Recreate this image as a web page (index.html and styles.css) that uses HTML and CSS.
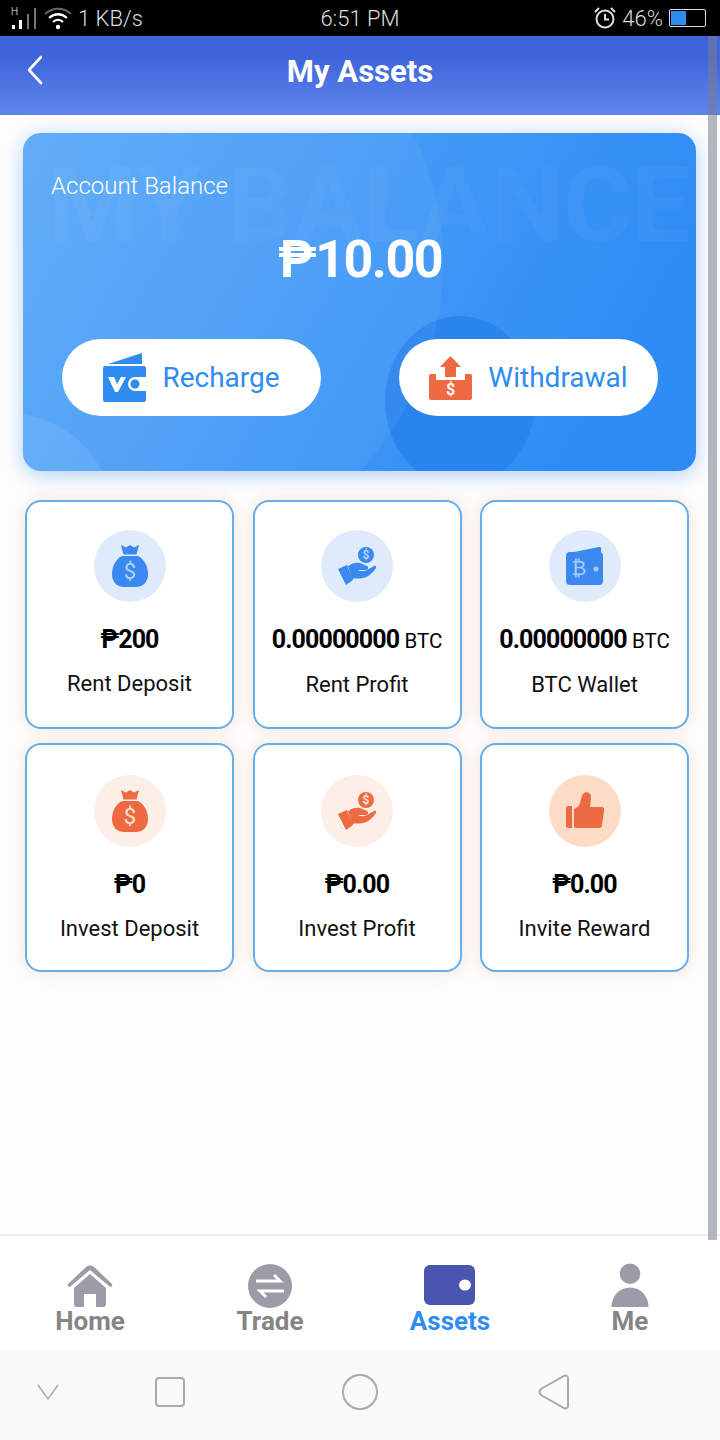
FILE: index.html
```html
<!DOCTYPE html>
<html>
<head>
    <meta charset="UTF-8">
    <title>My Assets</title>
    <link rel="stylesheet" href="styles.css">
</head>
<body>
<svg class="defs" width="0" height="0">
    <symbol id="bag" viewBox="0 0 36 44">
        <path d="M9 1l5 2.500 4-2.500 4 2.500 5-2.500-2.500 9.500h-13z"/>
        <path d="M10 12h16c6 3 10 10 10 18 0 9-6 13-12 13h-12c-6 0-12-4-12-13 0-8 4-15 10-18z"/>
    </symbol>
    <symbol id="hand" viewBox="0 0 38 40">
        <path d="M0 23l9-4 6 15-7 5z"/>
        <path d="M10 20c4-3 8-4 12-3l7 3c2 1 1 4-1 4h-8c3 2 7 1 9 0l7-4c2-1 3 1 2 2-3 5-8 9-13 10-5 1-8 0-11 1z"/>
    </symbol>
</svg>

<div class="status">
    <div class="status-left">
        <svg class="sig" width="28" height="26" viewBox="0 0 28 26">
            <text x="1" y="10" class="sig-h">H</text>
            <g fill="#fff"><rect x="2" y="20" width="3" height="4"/><rect x="9" y="15" width="3" height="9"/></g>
            <g fill="#777"><rect x="17" y="9" width="2" height="15"/><rect x="24" y="3" width="2" height="21"/></g>
        </svg>
        <svg width="30" height="24" viewBox="0 0 30 24" fill="none">
            <path d="M2 8c8-7 18-7 26 0" stroke="#666" stroke-width="2"/>
            <path d="M6 12c6-5 12-5 18 0" stroke="#fff" stroke-width="2.200"/>
            <path d="M10 16c3-3 7-3 10 0" stroke="#fff" stroke-width="2.200"/>
            <circle cx="15" cy="21" r="2.200" fill="#fff"/>
        </svg>
        <span>1 KB/s</span>
    </div>
    <div class="status-time">6:51 PM</div>
    <div class="status-right">
        <svg width="22" height="24" viewBox="0 0 22 24" fill="none" stroke="#ddd" stroke-width="2">
            <circle cx="11" cy="13" r="8.500"/>
            <path d="M11 8v5.500h4M1 6l4-4M21 6l-4-4"/>
        </svg>
        <span>46%</span>
        <div class="battery"><div class="battery-fill"></div></div>
    </div>
</div>

<header class="top">
    <svg class="back" width="18" height="30" viewBox="0 0 18 30" fill="none">
        <path d="M15 2L3 15l12 13" stroke="#fff" stroke-width="2.600" stroke-linecap="round" stroke-linejoin="round"/>
    </svg>
    <h1>My Assets</h1>
</header>

<main class="main">
    <section class="balance">
        <div class="ghost">MY BALANCE</div>
        <div class="blob blob-a"></div>
        <div class="blob blob-b"></div>
        <div class="blob blob-c"></div>
        <div class="balance-label">Account Balance</div>
        <div class="balance-num">₱10.00</div>
        <div class="balance-btns">
            <a class="pill">
                <svg width="43" height="49" viewBox="0 0 43 49">
                    <path d="M5 11L39 0v11z" fill="#2f8cf0"/>
                    <path d="M2 13h39a2 2 0 0 1 2 2v9H32a7 7 0 0 0 0 14h11v9a2 2 0 0 1-2 2H2a2 2 0 0 1-2-2V15a2 2 0 0 1 2-2z" fill="#2f8cf0"/>
                    <path d="M5 24h6l3 7 4-7h5l-8 15h-3z" fill="#fff"/>
                    <circle cx="32" cy="31" r="4.500" fill="#2f8cf0"/>
                </svg>
                <span>Recharge</span>
            </a>
            <a class="pill">
                <svg width="43" height="44" viewBox="0 0 43 44">
                    <path d="M21.500 0L32 11h-5v10H16V11h-5z" fill="#ee6a42"/>
                    <path d="M2 18h5v6h29v-6h5a2 2 0 0 1 2 2v22a2 2 0 0 1-2 2H2a2 2 0 0 1-2-2V20a2 2 0 0 1 2-2z" fill="#ee6a42"/>
                    <text x="21.500" y="39" class="pill-dollar">$</text>
                </svg>
                <span>Withdrawal</span>
            </a>
        </div>
    </section>

    <section class="tiles">
        <div class="tile">
            <div class="disc">
                <svg class="ic-blue" width="36" height="44"><use href="#bag"/><text x="18" y="35" class="ic-dollar ic-dollar-blue">$</text></svg>
            </div>
            <div class="num">₱200</div>
            <div class="name">Rent Deposit</div>
        </div>
        <div class="tile">
            <div class="disc">
                <svg class="ic-blue" width="38" height="40" viewBox="0 0 38 40">
                    <use href="#hand" width="38" height="40"/>
                    <circle cx="28" cy="9" r="8"/>
                    <text x="28" y="13" class="ic-dollar-sm ic-dollar-blue">$</text>
                </svg>
            </div>
            <div class="num">0.00000000 <small>BTC</small></div>
            <div class="name">Rent Profit</div>
        </div>
        <div class="tile">
            <div class="disc">
                <svg class="ic-blue" width="37" height="38" viewBox="0 0 37 38">
                    <path d="M3 6L33 0a2 2 0 0 1 2 3v3z"/>
                    <rect x="0" y="5" width="37" height="33" rx="4"/>
                    <text x="13" y="28" class="ic-btc">₿</text>
                    <circle cx="30" cy="22" r="2.500" fill="#a9ccf7"/>
                </svg>
            </div>
            <div class="num">0.00000000 <small>BTC</small></div>
            <div class="name">BTC Wallet</div>
        </div>
        <div class="tile">
            <div class="disc disc-warm">
                <svg class="ic-red" width="36" height="44"><use href="#bag"/><text x="18" y="35" class="ic-dollar ic-dollar-red">$</text></svg>
            </div>
            <div class="num">₱0</div>
            <div class="name">Invest Deposit</div>
        </div>
        <div class="tile">
            <div class="disc disc-warm">
                <svg class="ic-red" width="38" height="40" viewBox="0 0 38 40">
                    <use href="#hand" width="38" height="40"/>
                    <circle cx="28" cy="9" r="8"/>
                    <text x="28" y="13" class="ic-dollar-sm ic-dollar-red">$</text>
                </svg>
            </div>
            <div class="num">₱0.00</div>
            <div class="name">Invest Profit</div>
        </div>
        <div class="tile">
            <div class="disc disc-peach">
                <svg class="ic-red" width="38" height="38" viewBox="0 0 38 38">
                    <path d="M8 17c3-1 5-3 6-6 1-3 1-6 3-9 2-3 8-2 8 3 0 4-1 8-1 10h11c3 0 4 2 3 4l-2 14c0 2-1 3-3 3H10a2 2 0 0 1-2-2z"/>
                    <path d="M2 14h4v22H2a2 2 0 0 1-2-2V16a2 2 0 0 1 2-2z"/>
                </svg>
            </div>
            <div class="num">₱0.00</div>
            <div class="name">Invite Reward</div>
        </div>
    </section>
    <div class="scroll"></div>
</main>

<nav class="tabs">
    <a class="tab">
        <div class="tab-ic">
            <svg width="46" height="44" viewBox="0 0 46 44">
                <path d="M1 20L19 3c2-2 6-2 8 0l18 17c1 2-1 4-3 2L23 6 4 22c-2 2-4 0-3-2z"/>
                <path d="M23 10l16 14v16a3 3 0 0 1-3 3h-7V30H17v13h-7a3 3 0 0 1-3-3V24z"/>
            </svg>
        </div>
        <span>Home</span>
    </a>
    <a class="tab">
        <div class="tab-ic">
            <svg width="44" height="44" viewBox="0 0 44 44">
                <circle cx="22" cy="22" r="22"/>
                <path d="M8 17h24l-6-6M36 27H12l6 6" fill="none" stroke="#fff" stroke-width="3"/>
            </svg>
        </div>
        <span>Trade</span>
    </a>
    <a class="tab tab-on">
        <div class="tab-ic">
            <svg width="52" height="42" viewBox="0 0 52 42">
                <rect width="51" height="40" rx="6" fill="#4a55ae"/>
                <ellipse cx="41" cy="20" rx="6" ry="5.500" fill="#fff"/>
            </svg>
        </div>
        <span>Assets</span>
    </a>
    <a class="tab">
        <div class="tab-ic">
            <svg width="38" height="45" viewBox="0 0 38 46">
                <circle cx="19" cy="11" r="10.500"/>
                <path d="M0 45c0-11 8-20 19-20s19 9 19 20z"/>
            </svg>
        </div>
        <span>Me</span>
    </a>
</nav>

<div class="sysbar">
    <svg width="24" height="18" viewBox="0 0 24 18" fill="none"><path d="M2 2l10 14L22 2" stroke="#aaa" stroke-width="1.500"/></svg>
    <svg width="30" height="30" viewBox="0 0 30 30" fill="none"><rect x="1" y="1" width="28" height="28" rx="3" stroke="#aaa" stroke-width="2"/></svg>
    <svg width="36" height="36" viewBox="0 0 36 36" fill="none"><circle cx="18" cy="18" r="17" stroke="#aaa" stroke-width="2"/></svg>
    <svg width="32" height="36" viewBox="0 0 32 36" fill="none"><path d="M3 15L26 2c2-1 4 0 4 2v28c0 2-2 3-4 2L3 21c-2-2-2-4 0-6z" stroke="#aaa" stroke-width="2"/></svg>
</div>
</body>
</html>
```

FILE: styles.css
```css
* {
    margin: 0;
    padding: 0;
    box-sizing: border-box;
}

html, body {
    width: 720px;
    height: 1440px;
    overflow: hidden;
    font-family: Roboto, "Liberation Sans", sans-serif;
    background: #fff;
}

body {
    display: flex;
    flex-direction: column;
}

.defs {
    position: absolute;
}

/* status bar */
.status {
    height: 36px;
    background: #000;
    color: #ddd;
    font-size: 22px;
    font-weight: 300;
    display: grid;
    grid-template-columns: 1fr auto 1fr;
    align-items: center;
    padding: 0 14px 0 10px;
}

.status-left, .status-right {
    display: flex;
    align-items: center;
    gap: 5px;
}

.status-right {
    justify-content: flex-end;
    gap: 6px;
}

.sig-h {
    font-size: 10px;
    fill: #fff;
}

.status-time {
    font-size: 22px;
    margin-left: 4px;
}

.battery {
    width: 37px;
    height: 18px;
    border: 1px solid #ddd;
    border-radius: 2px;
    padding: 1px;
    position: relative;
}

.battery-fill {
    width: 46%;
    height: 100%;
    background: #2f8cf0;
}

/* header */
.top {
    height: 79px;
    background: linear-gradient(180deg, #3d64da 0%, #3d64da 25%, #5f85ec 100%);
    display: flex;
    align-items: center;
    justify-content: center;
    padding-bottom: 9px;
    position: relative;
}

.top h1 {
    font-size: 31px;
    font-weight: 700;
    color: #fff;
}

.back {
    position: absolute;
    left: 26px;
    top: 19px;
}

/* content */
.main {
    flex: 1;
    position: relative;
    padding: 18px 24px 0 23px;
    background: #fdfdfd;
    border-bottom: 2px solid #efefef;
}

.scroll {
    position: absolute;
    right: 3px;
    top: -79px;
    bottom: -6px;
    width: 9px;
    background: rgba(120, 125, 140, .55);
}

.balance {
    height: 338px;
    border-radius: 18px;
    background: linear-gradient(120deg, #5aa9f8 0%, #2f8cf5 85%);
    box-shadow: 0 4px 20px rgba(60, 140, 240, .4);
    position: relative;
    overflow: hidden;
    padding: 39px 38px 0 39px;
    color: #fff;
}

.ghost {
    position: absolute;
    left: 24px;
    top: 12px;
    font-size: 104px;
    font-weight: 700;
    white-space: nowrap;
    color: rgba(255, 255, 255, .035);
}

.blob {
    position: absolute;
    border-radius: 50%;
}

.blob-a {
    width: 150px;
    height: 170px;
    left: 362px;
    top: 183px;
    background: #2a84ee;
}

.blob-b {
    width: 840px;
    height: 700px;
    left: -420px;
    top: -220px;
    background: rgba(255, 255, 255, .05);
}

.blob-c {
    width: 210px;
    height: 210px;
    left: -120px;
    top: 280px;
    background: rgba(255, 255, 255, .08);
}

.balance-label {
    position: relative;
    margin-left: -11px;
    font-size: 24px;
    font-weight: 300;
    line-height: 28px;
}

.balance-num {
    position: relative;
    font-size: 52px;
    font-weight: 700;
    letter-spacing: -1.500px;
    line-height: 56px;
    text-align: center;
    margin-top: 32px;
}

.balance-btns {
    position: relative;
    display: flex;
    justify-content: space-between;
    margin-top: 51px;
}

.pill {
    width: 259px;
    height: 77px;
    border-radius: 39px;
    background: #fff;
    display: flex;
    align-items: center;
    justify-content: center;
    gap: 16px;
    color: #2f8cf0;
    font-size: 28px;
}

.pill-dollar {
    font-size: 16px;
    font-weight: 700;
    fill: #fff;
    text-anchor: middle;
}

/* tiles */
.tiles {
    display: grid;
    grid-template-columns: repeat(3, 209px);
    grid-auto-rows: 229px;
    column-gap: 18.500px;
    row-gap: 14px;
    margin: 29px 0 0 2px;
}

.tile {
    background: #fff;
    border: 2px solid #64aeea;
    border-radius: 16px;
    box-shadow: 0 0 16px rgba(245, 215, 195, .7);
    display: flex;
    flex-direction: column;
    align-items: center;
    padding-top: 28px;
}

.tile:nth-child(n+4) {
    padding-top: 30px;
}

.disc {
    width: 72px;
    height: 72px;
    border-radius: 50%;
    background: #dfebfa;
    display: flex;
    align-items: center;
    justify-content: center;
}

.disc-warm {
    background: #fbefe7;
}

.disc-peach {
    background: #fddcc6;
}

.ic-blue {
    fill: #3a88f0;
}

.ic-red {
    fill: #ee6a42;
}

.ic-dollar, .ic-dollar-sm {
    text-anchor: middle;
    font-family: Roboto, sans-serif;
}

.ic-dollar {
    font-size: 22px;
}

.ic-dollar-sm {
    font-size: 12px;
    font-weight: 700;
}

.ic-dollar-blue {
    fill: #b5d4fa;
}

.ic-dollar-red {
    fill: #fde3d4;
}

.ic-btc {
    font-family: "DejaVu Sans", sans-serif;
    font-size: 20px;
    text-anchor: middle;
    fill: #a9ccf7;
}

.num {
    margin-top: 23px;
    font-size: 25px;
    font-weight: 700;
    letter-spacing: -.9px;
    line-height: 30px;
    color: #000;
    white-space: nowrap;
}

.num small {
    font-size: 20.500px;
    font-weight: 400;
    letter-spacing: 0;
}

.name {
    margin-top: 15px;
    font-size: 22px;
    line-height: 28px;
    color: #111;
}

/* bottom tabs */
.tabs {
    height: 114px;
    background: #fff;
    display: grid;
    grid-template-columns: repeat(4, 180px);
    padding-top: 27px;
}

.tab {
    display: flex;
    flex-direction: column;
    align-items: center;
    fill: #9a9ca8;
    color: #858585;
    font-size: 26px;
    font-weight: 700;
    line-height: 26px;
}

.tab-ic {
    height: 45px;
    display: flex;
    align-items: center;
}

.tab-on {
    color: #2f8cf0;
}

.sysbar {
    height: 90px;
    background: #fafafa;
    display: grid;
    grid-template-columns: 96px 148px 232px 156px;
    justify-items: center;
    align-items: center;
    padding-bottom: 6px;
}
```
